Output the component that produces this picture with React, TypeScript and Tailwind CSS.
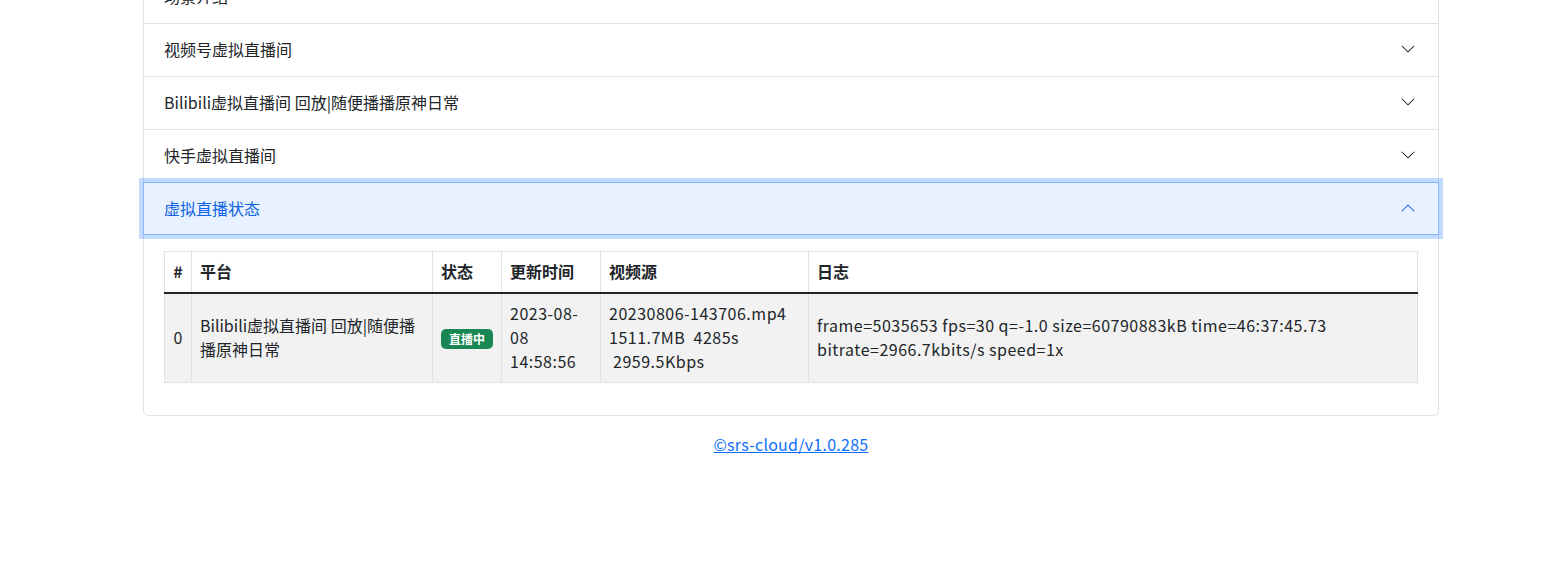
const Chevron = ({ up = false }: { up?: boolean }) => (
  <svg
    width="16"
    height="16"
    viewBox="0 0 16 16"
    className={up ? "rotate-180 shrink-0" : "shrink-0"}
    fill={up ? "#0c63e4" : "#212529"}
  >
    <path
      fillRule="evenodd"
      d="M1.646 4.646a.5.5 0 0 1 .708 0L8 10.293l5.646-5.647a.5.5 0 0 1 .708.708l-6 6a.5.5 0 0 1-.708 0l-6-6a.5.5 0 0 1 0-.708z"
    />
  </svg>
);

const items = ["场景介绍", "视频号虚拟直播间", "Bilibili虚拟直播间 回放|随便播播原神日常", "快手虚拟直播间"];

export default function App() {
  return (
    <div
      className="min-h-[570px] bg-white text-[#212529] text-[16px] leading-6 overflow-hidden"
      style={{ fontFamily: '"Noto Sans CJK SC", "Noto Sans", sans-serif' }}
    >
      <div className="ml-[143px] w-[1296px] -mt-[30px]">
        <div className="border border-[#dee2e6] rounded-b-md">
          {items.map((t) => (
            <div key={t} className="border-b border-[#dee2e6]">
              <div className="h-[52px] flex items-center justify-between px-5 pr-[22px] pb-[2px]">
                <span>{t}</span>
                <Chevron />
              </div>
            </div>
          ))}
          <div className="relative z-10 h-[53px] -mt-px flex items-center justify-between px-5 pr-[22px] pb-[2px] bg-[#e7f1ff] text-[#0c63e4] border border-[#86b7fe] -mx-px shadow-[0_0_0_4px_rgba(13,110,253,0.25)]">
            <span>虚拟直播状态</span>
            <Chevron up />
          </div>
          <div className="px-5 pt-[16px] pb-4">
            <table className="w-full mb-4 border-collapse border border-[#dee2e6]">
              <thead>
                <tr className="font-bold text-left">
                  <th className="w-[27px] p-2 pt-[7px] pb-[9px] border border-[#dee2e6] border-b-2 border-b-[#212529] text-center">#</th>
                  <th className="w-[241px] p-2 pt-[7px] pb-[9px] border border-[#dee2e6] border-b-2 border-b-[#212529]">平台</th>
                  <th className="w-[69px] p-2 pt-[7px] pb-[9px] border border-[#dee2e6] border-b-2 border-b-[#212529]">状态</th>
                  <th className="w-[99px] p-2 pt-[7px] pb-[9px] border border-[#dee2e6] border-b-2 border-b-[#212529]">更新时间</th>
                  <th className="w-[208px] p-2 pt-[7px] pb-[9px] border border-[#dee2e6] border-b-2 border-b-[#212529]">视频源</th>
                  <th className="p-2 pt-[7px] pb-[9px] border border-[#dee2e6] border-b-2 border-b-[#212529]">日志</th>
                </tr>
              </thead>
              <tbody>
                <tr className="bg-[#f2f2f2] align-middle">
                  <td className="p-2 pt-[7px] pb-[9px] border border-[#dee2e6] text-center">0</td>
                  <td className="p-2 pt-[7px] pb-[9px] border border-[#dee2e6]">Bilibili虚拟直播间 回放|随便播播原神日常</td>
                  <td className="p-2 pt-[7px] pb-[9px] border border-[#dee2e6]">
                    <span className="inline-block rounded-[5px] bg-[#198754] text-white text-[12px] font-bold leading-none px-[8px] py-[4px]">
                      直播中
                    </span>
                  </td>
                  <td className="p-2 pt-[7px] pb-[9px] border border-[#dee2e6] tracking-[0.5px]">2023-08-08 14:58:56</td>
                  <td className="p-2 pt-[7px] pb-[9px] border border-[#dee2e6] tracking-[0.5px]">
                    20230806-143706.mp4
                    <br />
                    1511.7MB{"\u00a0\u00a0"}4285s
                    <br />
                    {"\u00a0"}2959.5Kbps
                  </td>
                  <td className="p-2 pt-[7px] pb-[9px] border border-[#dee2e6] tracking-[0.5px]">
                    frame=5035653 fps=30 q=-1.0 size=60790883kB time=46:37:45.73
                    <br />
                    bitrate=2966.7kbits/s speed=1x
                  </td>
                </tr>
              </tbody>
            </table>
          </div>
        </div>
        <div className="text-center pt-[16px]">
          <a href="#" className="text-[#0d6efd] underline tracking-[0.25px]">
            ©srs-cloud/v1.0.285
          </a>
        </div>
      </div>
    </div>
  );
}
